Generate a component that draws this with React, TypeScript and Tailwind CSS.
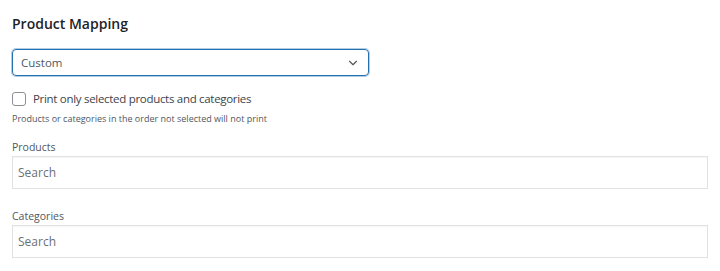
import { ChevronDown } from "lucide-react";

export default function App() {
  return (
    <div className="w-[720px] h-[271px] bg-white px-3 pt-[14px] font-['Open_Sans',sans-serif] text-[#50575e]">
      {/* HEADER */}
      <h2 className="text-[14px] leading-[20px] font-semibold text-[#1d2327]">Product Mapping</h2>

      {/* MAPPING SELECT */}
      <div className="mt-[15px] w-[357px] h-[27px] flex items-center justify-between pl-2 pr-[8px] border border-[#2271b1] rounded-[4px] shadow-[0_0_0_1px_rgba(34,113,177,0.35)]">
        <span className="text-[11.5px] text-[#50575e]">Custom</span>
        <ChevronDown size={14} strokeWidth={2} className="text-[#50575e]" />
      </div>

      {/* PRINT FILTER */}
      <label className="mt-[16px] flex items-center gap-[7px] h-[14px]">
        <span className="w-[14px] h-[14px] rounded-[3px] border border-[#8c8f94] bg-white" />
        <span className="text-[11.5px] tracking-[-0.3px] text-[#3c434a]">Print only selected products and categories</span>
      </label>
      <p className="mt-[7px] text-[9px] leading-[12px] text-[#50575e]">Products or categories in the order not selected will not print</p>

      {/* PRODUCTS */}
      <div className="mt-[15px]">
        <div className="text-[10.5px] leading-[14px] text-[#50575e]">Products</div>
        <div className="mt-[2px] w-[696px] h-[33px] flex items-center px-[5px] border border-[#e2e2e4] shadow-[inset_0_1px_1px_rgba(0,0,0,0.04)]">
          <span className="text-[12px] text-[#6b7075]">Search</span>
        </div>
      </div>

      {/* CATEGORIES */}
      <div className="mt-[20px]">
        <div className="text-[10.5px] leading-[14px] text-[#50575e]">Categories</div>
        <div className="mt-[2px] w-[696px] h-[33px] flex items-center px-[5px] border border-[#e2e2e4] shadow-[inset_0_1px_1px_rgba(0,0,0,0.04)]">
          <span className="text-[12px] text-[#6b7075]">Search</span>
        </div>
      </div>
    </div>
  );
}
